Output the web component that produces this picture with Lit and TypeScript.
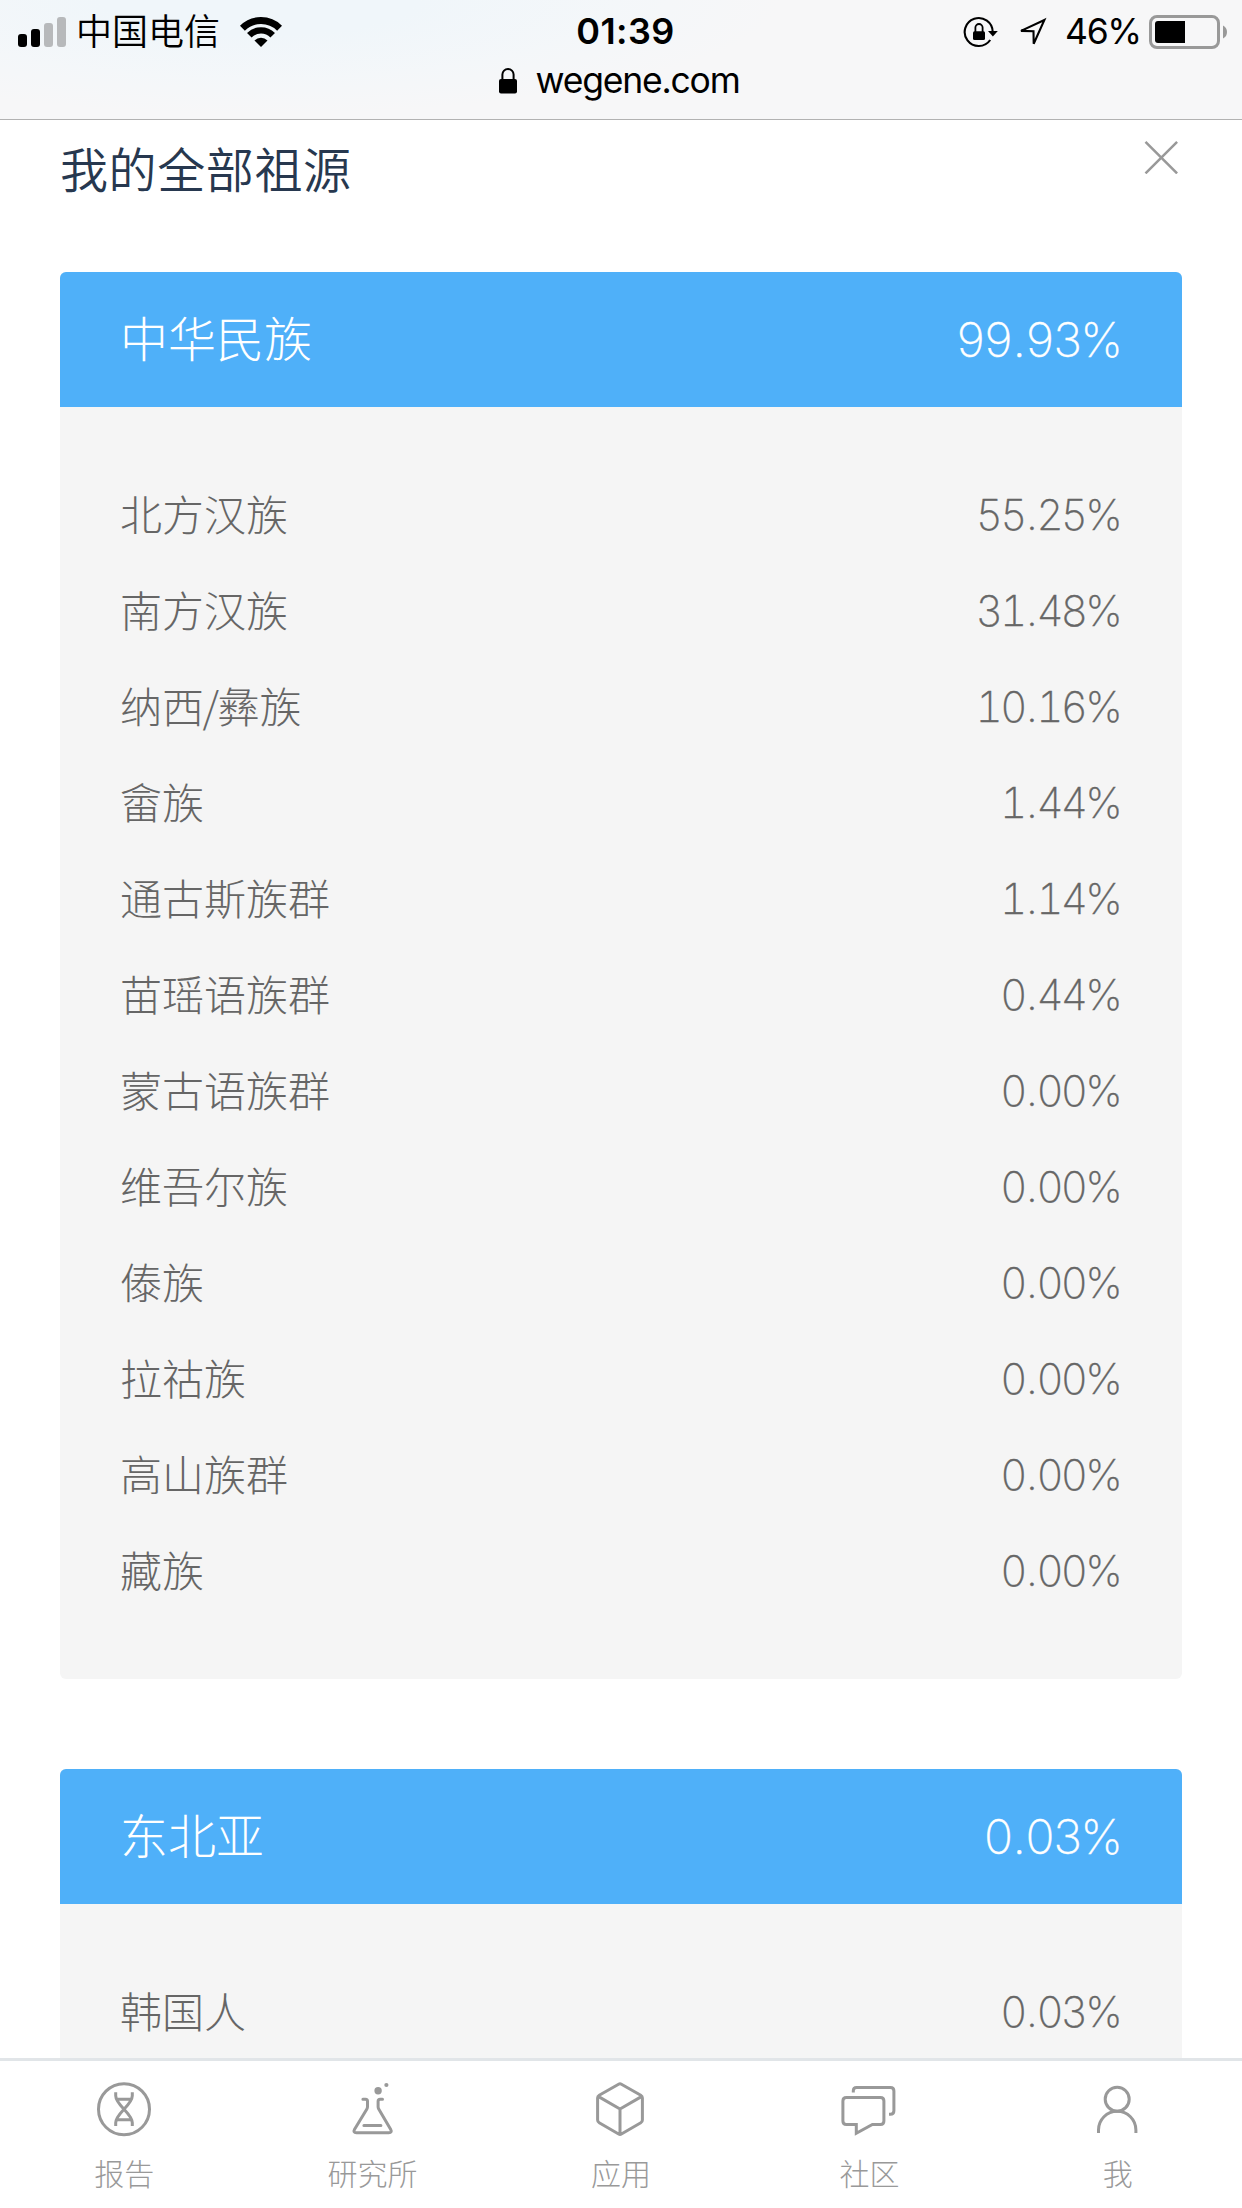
import { LitElement, html, svg, css } from "lit";
import { customElement, property } from "lit/decorators.js";

interface Entry {
  name: string;
  value: string;
}

interface Region extends Entry {
  items: Entry[];
}

const REGIONS: Region[] = [
  {
    name: "中华民族",
    value: "99.93%",
    items: [
      { name: "北方汉族", value: "55.25%" },
      { name: "南方汉族", value: "31.48%" },
      { name: "纳西/彝族", value: "10.16%" },
      { name: "畲族", value: "1.44%" },
      { name: "通古斯族群", value: "1.14%" },
      { name: "苗瑶语族群", value: "0.44%" },
      { name: "蒙古语族群", value: "0.00%" },
      { name: "维吾尔族", value: "0.00%" },
      { name: "傣族", value: "0.00%" },
      { name: "拉祜族", value: "0.00%" },
      { name: "高山族群", value: "0.00%" },
      { name: "藏族", value: "0.00%" },
    ],
  },
  {
    name: "东北亚",
    value: "0.03%",
    items: [{ name: "韩国人", value: "0.03%" }],
  },
];

const TABS = [
  {
    label: "报告",
    icon: svg`
      <circle cx="30" cy="30.2" r="25.5" />
      <path d="M21.7 13.3v3.4c0 9.4 16.6 17.6 16.6 27v3.3M38.3 13.3v3.4c0 9.4-16.6 17.6-16.6 27v3.3M23 20.3h14M23 40.7h14" />`,
  },
  {
    label: "研究所",
    icon: svg`
      <path stroke-linecap="round" stroke-linejoin="round" d="M19.9 20.2h2.6q2 0 2 2v5.6q0 1.2-.6 2.2L11.6 50.3q-1.8 3.4 1.8 3.4h32.4q3.6 0 1.8-3.4L35.7 30q-.6-1-.6-2.2v-5.6q0-2 2-2h2.4M20.9 46.6h17" />
      <circle class="solid" cx="35.1" cy="11.7" r="3.7" />
      <circle class="solid" cx="43.4" cy="6" r="2.1" />`,
  },
  {
    label: "应用",
    icon: svg`
      <path stroke-linejoin="round" d="M27.6 5.2q1.4-.8 2.8 0l19.4 11.1q1.6.9 1.6 2.7v22q0 1.8-1.6 2.7L30.4 55q-1.4.8-2.8 0L8.2 43.7q-1.6-.9-1.6-2.7V19q0-1.8 1.6-2.7zM7.6 17.6 29 30l21.4-12.4M29 30v25" />`,
  },
  {
    label: "社区",
    icon: svg`
      <path d="M7.4 18.4h34q3.5 0 3.5 3.5v20q0 3.5-3.5 3.5h-8l-16.1 8.8v-8.8H7.4q-3.5 0-3.5-3.5v-20q0-3.5 3.5-3.5zM14.3 13.6v-1.8q0-3.2 3.2-3.2h33.9q3.5 0 3.5 3.5v19.7q0 3.5-3.5 3.5H50" />`,
  },
  {
    label: "我",
    icon: svg`
      <circle cx="29.2" cy="20.2" r="12" />
      <path d="M10.5 54v-3a18.7 18.7 0 0 1 37.4 0v3" />`,
  },
];

@customElement("status-bar")
export class StatusBar extends LitElement {
  static styles = css`
    :host {
      display: block;
      flex: none;
      height: 119px;
      border-bottom: 1px solid #b2b2b2;
      color: #000;
      background:
        radial-gradient(ellipse 520px 115px at 260px 0, #f0f6fa 30%, rgba(243, 247, 250, 0.7) 70%, rgba(247, 247, 248, 0) 100%),
        #f7f7f8;
      font-family: Inter, "Noto Sans CJK SC", sans-serif;
      font-size: 36px;
    }
    .line {
      display: grid;
      grid-template-columns: 1fr auto 1fr;
      height: 62px;
      padding: 0 14px 0 18px;
    }
    .side {
      display: flex;
      align-items: center;
    }
    .end {
      justify-content: flex-end;
    }
    .carrier {
      margin: 0 20px 0 10px;
      padding-bottom: 6px;
      font-family: "Noto Sans CJK SC", sans-serif;
      font-weight: 350;
      line-height: 56px;
    }
    .time {
      font-weight: 600;
      font-size: 36px;
      line-height: 63px;
      padding-left: 5px;
      letter-spacing: 0.4px;
    }
    .battery-text {
      width: 72px;
      margin: 0 12px 0 18px;
      line-height: 62px;
      font-size: 35.5px;
      letter-spacing: -1.3px;
      white-space: nowrap;
    }
    .location {
      margin-left: 17px;
    }
    .address {
      display: flex;
      justify-content: center;
      align-items: center;
      gap: 18px;
      height: 38px;
      padding-right: 3px;
      line-height: 38px;
    }
    .domain {
      font-size: 35.5px;
      letter-spacing: -1.2px;
    }
    svg {
      display: block;
      flex: none;
    }
  `;

  render() {
    return html`
      <div class="line">
        <div class="side">
          <svg width="48" height="32" viewBox="0 0 48 32">
            <rect x="0" y="18" width="9" height="13" rx="3" />
            <rect x="13" y="13" width="9" height="18" rx="3" />
            <rect x="26" y="7" width="9" height="24" rx="3" fill="#b7b9bb" />
            <rect x="39" y="1" width="9" height="30" rx="3" fill="#b7b9bb" />
          </svg>
          <span class="carrier">中国电信</span>
          <svg width="42" height="32" viewBox="0 0 42 32">
            <g fill="none" stroke="#000">
              <path stroke-width="7" d="M2.4 12.2a26.4 26.4 0 0 1 37.2 0" />
              <path stroke-width="6.4" d="M9.3 19.2a16.5 16.5 0 0 1 23.4 0" />
            </g>
            <path d="M14.5 24.4a9.3 9.3 0 0 1 13 0L21 30.9z" />
          </svg>
        </div>
        <span class="time">01:39</span>
        <div class="side end">
          <svg width="36" height="32" viewBox="0 0 36 32">
            <path fill="none" stroke="#000" stroke-width="2.1" d="M29.7 16A14 14 0 1 0 27.2 24" />
            <path d="M25 15h9.8l-4.9 5.6z" />
            <rect x="10" y="15.3" width="12" height="8.8" rx="1.5" />
            <path fill="none" stroke="#000" stroke-width="1.8" d="M12.4 16v-4.4a3.6 3.6 0 0 1 7.2 0V16" />
          </svg>
          <svg class="location" width="31" height="32" viewBox="0 0 31 32">
            <path fill="none" stroke="#000" stroke-width="2.1" d="M28.4 4 5 14.9l12.5.3.2 12.6z" />
          </svg>
          <span class="battery-text">46%</span>
          <svg width="79" height="34" viewBox="0 0 79 34">
            <rect x="1.5" y="1.5" width="68" height="31" rx="6.5" fill="none" stroke="#999" stroke-width="3" />
            <path d="M9 6h27v22H9q-3 0-3-3V9q0-3 3-3z" />
            <path fill="#999" d="M74 10.5q4 2 4 6.5t-4 6.5z" />
          </svg>
        </div>
      </div>
      <div class="address">
        <svg width="18" height="28" viewBox="0 0 18 28">
          <rect x="0" y="12" width="18" height="14.5" rx="2" />
          <path fill="none" stroke="#000" stroke-width="2" d="M3.4 13V7.6a5.6 5.6 0 0 1 11.2 0V13" />
        </svg>
        <span class="domain">wegene.com</span>
      </div>
    `;
  }
}

@customElement("region-card")
export class RegionCard extends LitElement {
  @property({ attribute: false }) region!: Region;

  static styles = css`
    :host {
      display: block;
      flex: none;
      overflow: hidden;
      border-radius: 6px;
      background: #f5f5f5;
      color: #666;
      font-family: "Noto Sans CJK SC", sans-serif;
      font-weight: 300;
    }
    .row {
      display: flex;
      justify-content: space-between;
      height: 96px;
      padding: 0 62px 0 60px;
      font-size: 42px;
      line-height: 92px;
    }
    .head {
      height: 135px;
      background: #4fb0f9;
      color: #fff;
      font-size: 48px;
      line-height: 128px;
    }
    .list {
      padding: 60px 0;
    }
    .slash {
      margin: 0 -1.5px;
    }
    .value {
      font-family: Inter, sans-serif;
      font-weight: 250;
      font-variant-numeric: tabular-nums;
      letter-spacing: -0.065em;
      line-height: 95px;
      -webkit-text-stroke: 0.35px currentColor;
    }
    .head .value {
      line-height: 135px;
    }
    .point {
      margin: 0 0.04em;
    }
  `;

  private renderName(name: string) {
    const [first, second] = name.split("/");
    return second ? html`${first}<span class="slash">/</span>${second}` : first;
  }

  private renderValue(value: string) {
    const [whole, rest] = value.split(".");
    return html`<span class="value">${whole}<span class="point">.</span>${rest}</span>`;
  }

  render() {
    const { name, value, items } = this.region;
    return html`
      <div class="row head"><span>${name}</span>${this.renderValue(value)}</div>
      <div class="list">
        ${items.map(
          (item) => html`<div class="row"><span>${this.renderName(item.name)}</span>${this.renderValue(item.value)}</div>`
        )}
      </div>
    `;
  }
}

@customElement("tab-bar")
export class TabBar extends LitElement {
  static styles = css`
    :host {
      display: grid;
      grid-template-columns: repeat(5, 1fr);
      flex: none;
      box-sizing: border-box;
      height: 150px;
      border-top: 3px solid #e1e5e8;
      background: #fff;
      color: #999;
      font-family: "Noto Sans CJK SC", sans-serif;
      font-size: 30px;
      font-weight: 300;
    }
    .tab {
      display: flex;
      flex-direction: column;
      align-items: center;
      gap: 12px;
      padding-top: 18px;
      line-height: 42px;
    }
    svg {
      display: block;
      fill: none;
      stroke: #999;
      stroke-width: 3;
    }
    .solid {
      fill: #999;
      stroke: none;
    }
  `;

  render() {
    return TABS.map(
      (tab) => html`
        <div class="tab">
          <svg width="60" height="60" viewBox="0 0 60 60">${tab.icon}</svg>
          <span>${tab.label}</span>
        </div>
      `
    );
  }
}

@customElement("app-root")
export class AppRoot extends LitElement {
  static styles = css`
    :host {
      display: flex;
      flex-direction: column;
      height: 2208px;
      overflow: hidden;
      background: #fff;
    }
    .page {
      display: flex;
      flex-direction: column;
      gap: 90px;
      flex: 1;
      min-height: 0;
      overflow: hidden;
      padding: 0 60px;
    }
    .top {
      display: flex;
      justify-content: space-between;
      flex: none;
      height: 62px;
    }
    .title {
      margin: 0;
      padding-top: 12px;
      color: #27384f;
      font: 350 48px/70px "Noto Sans CJK SC", sans-serif;
      letter-spacing: 0.6px;
    }
    .close {
      margin: 20px 4px 0 0;
    }
  `;

  render() {
    return html`
      <status-bar></status-bar>
      <div class="page">
        <div class="top">
          <h1 class="title">我的全部祖源</h1>
          <svg class="close" width="34" height="34" viewBox="0 0 34 34">
            <path fill="none" stroke="#999" stroke-width="2.5" d="m1.5 1.8 31.6 31.6m0-31.6L1.5 33.4" />
          </svg>
        </div>
        ${REGIONS.map((region) => html`<region-card .region=${region}></region-card>`)}
      </div>
      <tab-bar></tab-bar>
    `;
  }
}
